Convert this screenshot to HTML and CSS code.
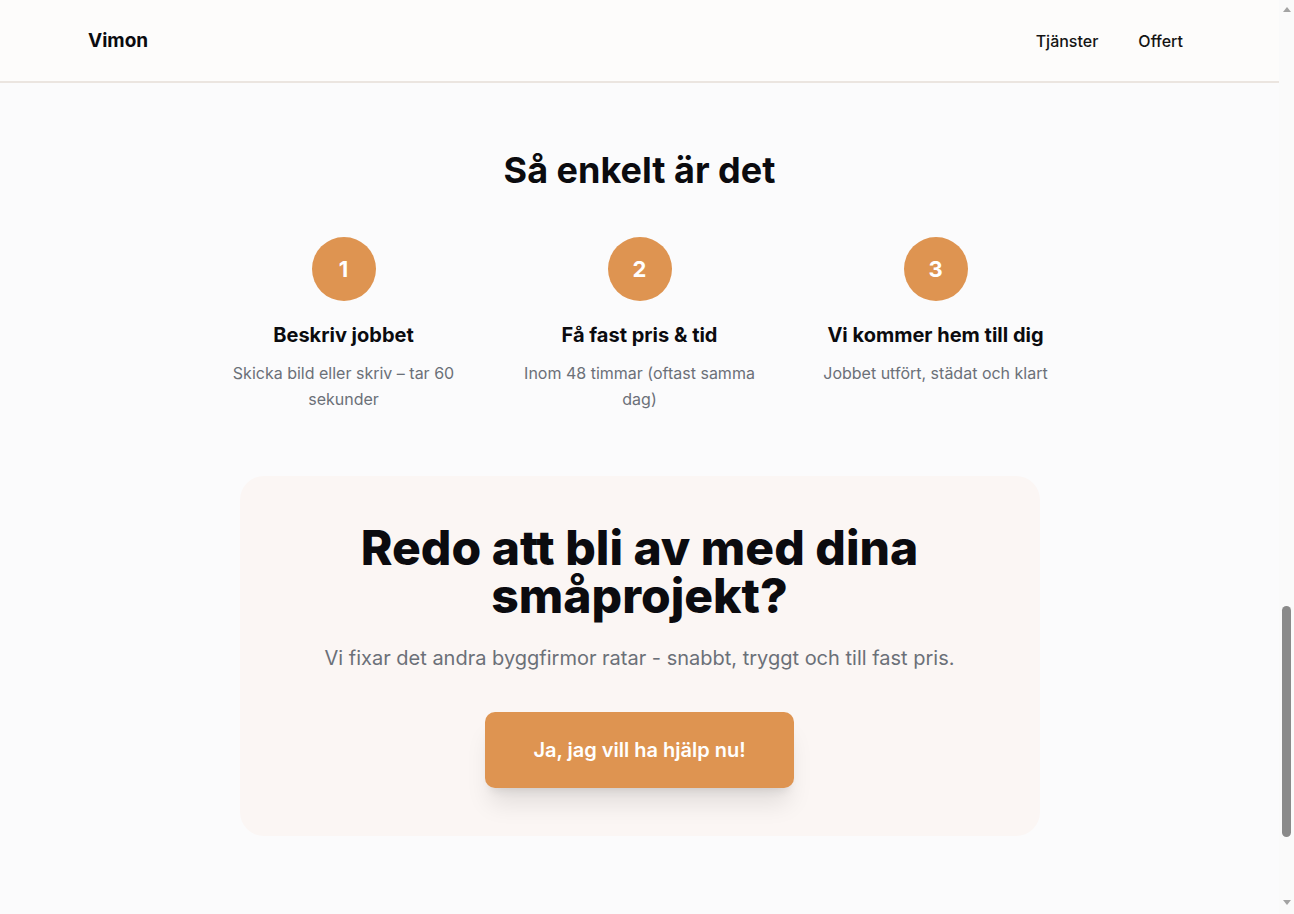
FILE: index.html
```html
<!DOCTYPE html>
<html lang="sv">
<head>
<meta charset="utf-8">
<title>Vimon</title>
<link rel="stylesheet" href="styles.css">
</head>
<body>
<div class="window">
  <div class="page">
    <header class="site-header">
      <div class="brand">Vimon</div>
      <nav class="nav">
        <a class="nav-link" href="#tjanster">Tjänster</a>
        <a class="nav-link" href="#offert">Offert</a>
      </nav>
    </header>
    <main class="main">
      <section class="how" id="how">
        <h2 class="how-title">Så enkelt är det</h2>
        <div class="steps">
          <div class="step">
            <div class="step-num">1</div>
            <h3 class="step-title">Beskriv jobbet</h3>
            <p class="step-text">Skicka bild eller skriv – tar 60 sekunder</p>
          </div>
          <div class="step">
            <div class="step-num">2</div>
            <h3 class="step-title">Få fast pris &amp; tid</h3>
            <p class="step-text">Inom 48 timmar (oftast samma dag)</p>
          </div>
          <div class="step">
            <div class="step-num">3</div>
            <h3 class="step-title">Vi kommer hem till dig</h3>
            <p class="step-text">Jobbet utfört, städat och klart</p>
          </div>
        </div>
      </section>
      <section class="cta-section" id="offert">
        <div class="cta-card">
          <h2 class="cta-title">Redo att bli av med dina småprojekt?</h2>
          <p class="cta-text">Vi fixar det andra byggfirmor ratar - snabbt, tryggt och till fast pris.</p>
          <a class="cta-button" href="#offert">Ja, jag vill ha hjälp nu!</a>
        </div>
      </section>
    </main>
  </div>
  <div class="scrollbar" aria-hidden="true">
    <div class="sb-arrow sb-up"></div>
    <div class="sb-track"><div class="sb-thumb"></div></div>
    <div class="sb-arrow sb-down"></div>
  </div>
</div>
</body>
</html>
```

FILE: styles.css
```css
* { box-sizing: border-box; }
html, body { margin: 0; padding: 0; height: 100%; overflow: hidden; }
body {
  font-family: Inter, "Noto Sans", "Liberation Sans", sans-serif;
  background: #fbfbfc;
  color: #0b0b0f;
}
.window {
  display: flex;
  height: 914px;
}
.page {
  flex: 1;
  min-width: 0;
  height: 914px;
  overflow: hidden;
  background: #fbfbfc;
}
.site-header {
  height: 83px;
  background: #fdfcfb;
  border-bottom: 2px solid #ebe5e0;
  display: flex;
  align-items: center;
  justify-content: space-between;
  padding: 0 88px;
}
.brand { font-size: 19px; font-weight: 700; color: #0b0b0f; }
.nav { display: flex; gap: 24px; }
.nav-link {
  font-size: 16px;
  font-weight: 500;
  color: #141414;
  text-decoration: none;
  padding: 8px;
}
.how {
  padding: 67px 0 64px;
  display: flex;
  flex-direction: column;
  align-items: center;
}
.how-title {
  margin: 0 0 47px;
  font-size: 36px;
  line-height: 40px;
  font-weight: 700;
  text-align: center;
}
.steps {
  display: grid;
  grid-template-columns: repeat(3, 264px);
  column-gap: 32px;
}
.step {
  display: flex;
  flex-direction: column;
  align-items: center;
  text-align: center;
  padding: 0 12px;
}
.step-num {
  width: 64px; height: 64px;
  border-radius: 50%;
  background: #de9451;
  color: #fff;
  font-size: 22px;
  font-weight: 700;
  display: flex;
  align-items: center;
  justify-content: center;
}
.step-title {
  margin: 20px 0 0;
  font-size: 20px;
  line-height: 28px;
  font-weight: 700;
}
.step-text {
  margin: 11px 0 0;
  font-size: 16px;
  line-height: 26px;
  color: #6b7078;
}
.cta-section {
  display: flex;
  justify-content: center;
}
.cta-card {
  width: 800px;
  background: #fbf6f4;
  border-radius: 24px;
  padding: 48px 64px;
  display: flex;
  flex-direction: column;
  align-items: center;
  text-align: center;
}
.cta-title {
  margin: 0;
  font-size: 48px;
  line-height: 48px;
  font-weight: 800;
  max-width: 620px;
}
.cta-text {
  margin: 24px 0 0;
  font-size: 20px;
  line-height: 28px;
  color: #6b7078;
}
.cta-button {
  margin-top: 40px;
  display: inline-block;
  padding: 24px 48px;
  background: #de9451;
  color: #fff;
  font-size: 20px;
  line-height: 28px;
  font-weight: 600;
  text-decoration: none;
  border-radius: 10px;
  box-shadow: 0 20px 25px -5px rgba(0,0,0,0.1), 0 8px 10px -6px rgba(0,0,0,0.1);
}
.scrollbar {
  width: 15px;
  flex: none;
  background: #fafafa;
  display: flex;
  flex-direction: column;
  align-items: center;
}
.sb-arrow {
  width: 0; height: 0;
  border-left: 4px solid transparent;
  border-right: 4px solid transparent;
}
.sb-up {
  margin-top: 7px;
  border-bottom: 5px solid #a3a3a3;
}
.sb-track {
  flex: 1;
  width: 100%;
  display: flex;
  flex-direction: column;
  align-items: center;
}
.sb-thumb {
  margin-top: 594px;
  width: 9px;
  height: 231px;
  border-radius: 5px;
  background: #8a8a8a;
}
.sb-down {
  margin-bottom: 9px;
  border-top: 5px solid #a3a3a3;
}
```
